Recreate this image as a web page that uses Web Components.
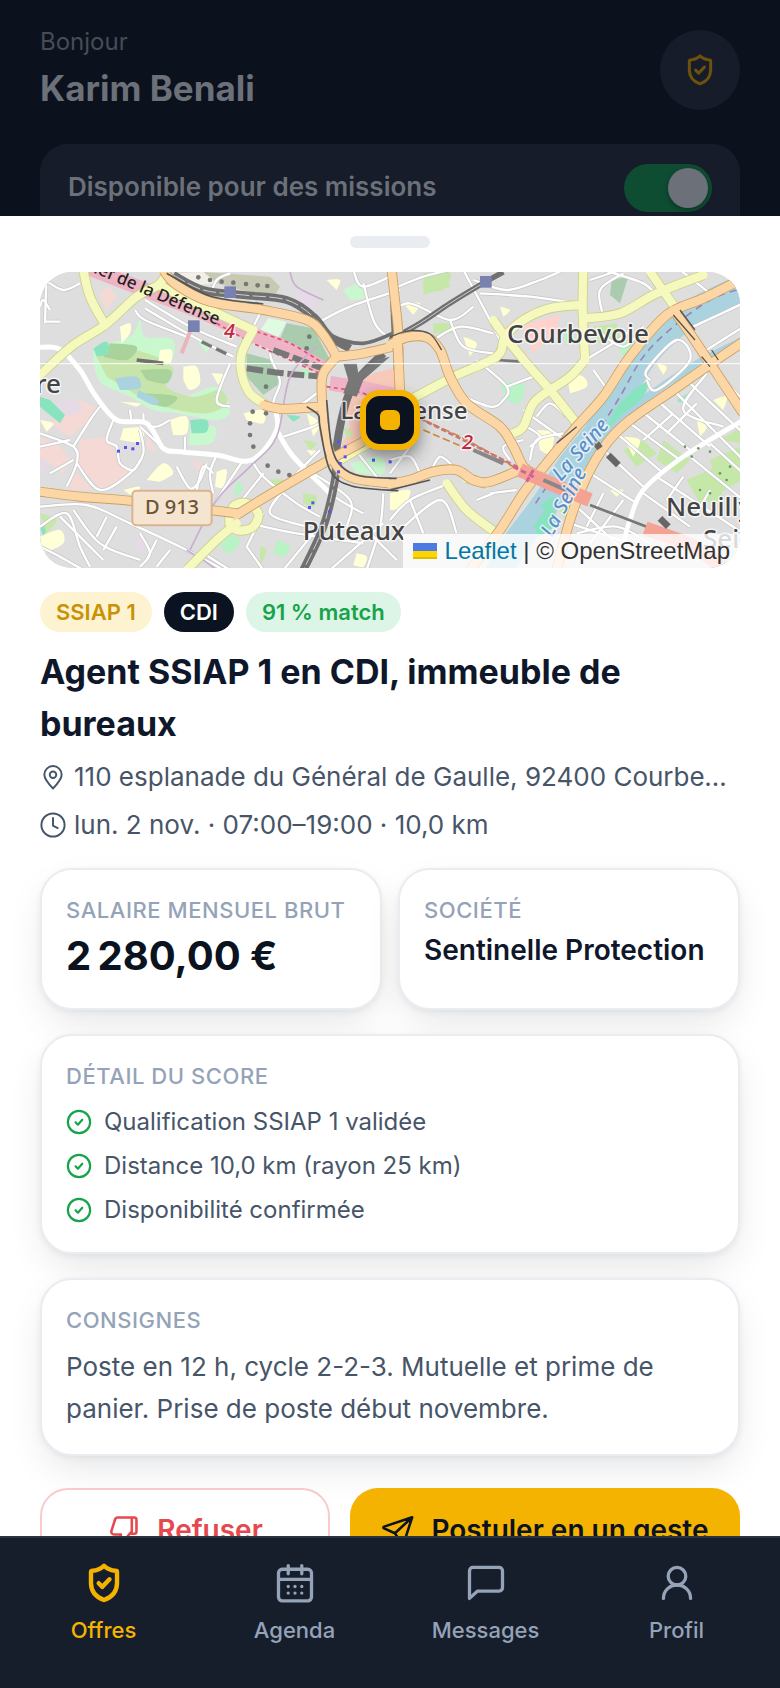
<!DOCTYPE html>
<html lang="fr">
<head>
<meta charset="utf-8">
<meta name="viewport" content="width=device-width, initial-scale=1">
<title>Offre de mission</title>
<style>
html, body { margin: 0; height: 100%; background: #0b111d; }
body { font-family: Inter, "Liberation Sans", sans-serif; color: #0f172a; overflow: hidden; }
</style>
</head>
<body>
<app-shell>
  <agent-header slot="header" name="Karim Benali"></agent-header>
  <offer-sheet>
    <offer-map slot="map"></offer-map>
    <ui-chip slot="chips" tone="gold">SSIAP 1</ui-chip>
    <ui-chip slot="chips" tone="dark">CDI</ui-chip>
    <ui-chip slot="chips" tone="green">91 % match</ui-chip>
    <span slot="title">Agent SSIAP 1 en CDI, immeuble de bureaux</span>
    <meta-line slot="meta" icon="pin">110 esplanade du Général de Gaulle, 92400 Courbevoie</meta-line>
    <meta-line slot="meta" icon="clock">lun. 2 nov. · 07:00–19:00 · 10,0 km</meta-line>
    <info-card slot="stats" heading="Salaire mensuel brut"><stat-value size="large">2&#8239;280,00&nbsp;€</stat-value></info-card>
    <info-card slot="stats" heading="Société"><stat-value>Sentinelle Protection</stat-value></info-card>
    <info-card heading="Détail du score">
      <score-list>
        <score-item>Qualification SSIAP 1 validée</score-item>
        <score-item>Distance 10,0 km (rayon 25 km)</score-item>
        <score-item>Disponibilité confirmée</score-item>
      </score-list>
    </info-card>
    <info-card heading="Consignes"><note-text>Poste en 12 h, cycle 2-2-3. Mutuelle et prime de panier. Prise de poste début novembre.</note-text></info-card>
    <action-button slot="actions" icon="thumb" tone="danger">Refuser</action-button>
    <action-button slot="actions" icon="send" tone="primary">Postuler en un geste</action-button>
  </offer-sheet>
  <tab-bar slot="tabs"></tab-bar>
</app-shell>

<script>
const ICONS = {
  shield: '<path d="M12 2.6c-1.7 1.7-3.9 2.6-6.4 2.7-.4 0-.7.3-.7.7V12c0 4.6 3 7.8 7.1 9.3 4.100-1.500 7.100-4.700 7.100-9.300V6c0-.4-.3-.7-.7-.7-2.500-.1-4.700-1-6.400-2.700z"/><path d="m9.100 12.100 2 2 3.900-4.100"/>',
  calendar: '<rect x="3" y="4.500" width="18" height="17.200" rx="2"/><path d="M3 10h18M8.300 2.500v4.500M15.700 2.500v4.500"/><g fill="currentColor" stroke="none"><circle cx="8.300" cy="13.900" r=".9"/><circle cx="12" cy="13.900" r=".9"/><circle cx="15.700" cy="13.900" r=".9"/><circle cx="8.300" cy="17.500" r=".9"/><circle cx="12" cy="17.500" r=".9"/><circle cx="15.700" cy="17.500" r=".9"/></g>',
  message: '<path d="M3 20.400V5.400c0-1.100.8-1.900 1.900-1.900h14.200c1.100 0 1.900.8 1.900 1.900v9.100c0 1.100-.8 1.900-1.900 1.900H7.400z"/>',
  user: '<circle cx="12" cy="8.300" r="4.800"/><path d="M4.600 20.400c0-4.200 3.300-7.300 7.400-7.300s7.400 3.100 7.400 7.300"/>',
  pin: '<path d="M12 22.600c-4.900-5.200-8-8.800-8-12.700a8 8 0 0 1 16 0c0 3.900-3.100 7.500-8 12.700z"/><circle cx="12" cy="10" r="3"/>',
  clock: '<circle cx="12" cy="12" r="10.700"/><path d="M12 5.600V12.600l4.300 2.200"/>',
  check: '<circle cx="12" cy="12" r="10.300"/><path d="m8.800 12.300 2.200 2.200 4-4.600"/>',
  thumb: '<path d="M17.500 3.200H7.600c-1 0-1.600.5-1.900 1.400L3.200 12.400c-.5 1.500.4 2.800 1.900 2.800h4.800l-1.300 4.200c-.3 1.300.6 2.400 1.900 2.400l5.200-6.800 1.800-1.800zM17.500 3.200h1.700c1 0 1.600.6 1.600 1.600v8.200c0 1-.6 1.600-1.600 1.600h-1.700"/>',
  send: '<path d="M22 3 2.200 9.600c-.7.300-.7 1 0 1.300l7.600 3.400 5 7.400c.4.600 1 .5 1.200-.2zM22 3 9.800 14.300"/>'
};

/* Small base: renders a shadow root from css() and html(). */
class View extends HTMLElement {
  connectedCallback() {
    if (this.shadowRoot) return;
    this.attachShadow({ mode: 'open' }).innerHTML = `<style>*{box-sizing:border-box}:host{display:block;box-sizing:border-box}${this.css()}</style>${this.html()}`;
  }
}

customElements.define('ui-icon', class extends View {
  css() { return ':host{flex:none;width:var(--icon,24px);height:var(--icon,24px)}svg{display:block;width:100%;height:100%}'; }
  html() { return `<svg viewBox="0 0 24 24" fill="none" stroke="currentColor" stroke-width="${this.getAttribute('weight') || '1.800'}" stroke-linecap="round" stroke-linejoin="round" aria-hidden="true">${ICONS[this.getAttribute('name')]}</svg>`; }
});

customElements.define('app-shell', class extends View {
  css() { return `:host{display:grid;grid-template-rows:216px minmax(0,1fr) auto;grid-template-columns:minmax(0,1fr);height:100vh}
    div{overflow:hidden;min-height:0}`; }
  html() { return '<div><slot name="header"></slot></div><div><slot></slot></div><slot name="tabs"></slot>'; }
});

customElements.define('agent-header', class extends View {
  css() { return `:host{padding:24px 40px;color:#6c7079}
    .top{display:flex;justify-content:space-between;align-items:center;margin-bottom:28px}
    p{margin:0;font-size:24px;line-height:36px;color:#474c56}
    h1{margin:0;font-size:35px;line-height:56px;font-weight:700}
    .badge{display:grid;place-items:center;width:80px;height:80px;border:0;border-radius:50%;background:#161c29;color:#6d510c;--icon:36px;padding:0}
    .row{display:flex;justify-content:space-between;align-items:flex-start;padding:20px 28px;min-height:120px;border-radius:28px;background:#161c29}
    label{font-size:26px;line-height:46px;font-weight:600}
    input{appearance:none;margin:0;width:88px;height:48px;padding:4px;border-radius:24px;background:#0f4d33;display:flex;justify-content:flex-end}
    input::before{content:"";width:40px;height:40px;border-radius:50%;background:#6c7079;box-shadow:0 2px 6px #0005}`; }
  html() { return `<div class="top"><div><p>Bonjour</p><h1>${this.getAttribute('name')}</h1></div>
    <button class="badge" aria-label="Habilitations"><ui-icon name="shield" weight="2"></ui-icon></button></div>
    <div class="row"><label for="dispo">Disponible pour des missions</label><input id="dispo" type="checkbox" role="switch" checked></div>`; }
});

customElements.define('offer-sheet', class extends View {
  css() { return `:host{background:#fff;padding:20px 40px 40px;min-height:100%}
    .handle{width:80px;height:12px;border-radius:6px;background:#e9edf2;margin:0 auto 24px}
    .chips{display:flex;gap:12px;margin:24px 0 14px}
    h2{margin:0 0 3px;font-size:34px;line-height:52px;font-weight:700;color:#0f172a}
    .stats{display:grid;grid-template-columns:repeat(2,minmax(0,1fr));gap:16px;margin-top:19px}
    .cards{display:grid;gap:24px;margin-top:24px}
    .actions{display:grid;grid-template-columns:290px minmax(0,1fr);gap:20px;margin-top:32px}`; }
  html() { return `<div class="handle"></div><slot name="map"></slot><div class="chips"><slot name="chips"></slot></div>
    <h2><slot name="title"></slot></h2><slot name="meta"></slot><div class="stats"><slot name="stats"></slot></div>
    <div class="cards"><slot></slot></div><div class="actions"><slot name="actions"></slot></div>`; }
});

customElements.define('ui-chip', class extends View {
  css() { return `:host{padding:0 16px;border-radius:20px;font-size:22px;line-height:40px;font-weight:600}
    :host([tone=gold]){background:#fef3d0;color:#c79206}:host([tone=dark]){background:#0b1220;color:#fff}:host([tone=green]){background:#dcf5e6;color:#16a34a}`; }
  html() { return '<slot></slot>'; }
});

customElements.define('meta-line', class extends View {
  css() { return `:host{display:flex;align-items:center;gap:8px;height:48px;font-size:26px;line-height:48px;color:#475569;--icon:26px}
    span{min-width:0;overflow:hidden;white-space:nowrap;text-overflow:ellipsis}`; }
  html() { return `<ui-icon name="${this.getAttribute('icon')}"></ui-icon><span><slot></slot></span>`; }
});

customElements.define('info-card', class extends View {
  css() { return `:host{border:2px solid #e9edf2;border-radius:32px;padding:24px;background:#fff;box-shadow:0 2px 6px #0b12200f,0 16px 40px -8px #0b12201f}
    h3{margin:0;font-size:22px;line-height:32px;font-weight:500;letter-spacing:.025em;text-transform:uppercase;color:#94a3b8}`; }
  html() { return `<h3>${this.getAttribute('heading')}</h3><slot></slot>`; }
});

customElements.define('stat-value', class extends View {
  css() { return `:host{font-size:28px;line-height:40px;font-weight:600;margin-top:4px;color:#0f172a;white-space:nowrap}
    :host([size=large]){font-size:40px;line-height:56px;font-weight:700;margin-top:2px;color:#0b1220}`; }
  html() { return '<slot></slot>'; }
});

customElements.define('score-list', class extends View {
  css() { return ':host{display:grid;gap:8px;margin-top:12px}'; }
  html() { return '<slot></slot>'; }
});

customElements.define('score-item', class extends View {
  css() { return ':host{display:flex;align-items:center;gap:12px;font-size:24px;line-height:36px;color:#475569;--icon:26px}ui-icon{color:#16a34a}'; }
  html() { return '<ui-icon name="check" weight="2"></ui-icon><span><slot></slot></span>'; }
});

customElements.define('note-text', class extends View {
  css() { return ':host{margin-top:10px;font-size:26px;line-height:42px;color:#475569}'; }
  html() { return '<slot></slot>'; }
});

customElements.define('action-button', class extends View {
  css() { return `button{width:100%;height:84px;display:flex;align-items:center;justify-content:center;gap:16px;border-radius:28px;border:0;background:#f5b301;color:#0b1220;font:600 28px/40px Inter,sans-serif;white-space:nowrap;--icon:34px;padding:0}
    :host([tone=danger]) button{background:#fff;border:2px solid #f9c9cb;color:#e5484d}`; }
  html() { return `<button><ui-icon name="${this.getAttribute('icon')}"></ui-icon><slot></slot></button>`; }
});

customElements.define('tab-bar', class extends View {
  css() { return `:host{background:#171e2b;border-top:2px solid #2c3440}
    nav{display:grid;grid-template-columns:repeat(4,minmax(0,1fr));padding:23px 8px 41px}
    a{display:flex;flex-direction:column;align-items:center;gap:8px;color:#94a3b8;text-decoration:none;font-size:22px;line-height:34px;font-weight:500;--icon:44px}
    a[aria-current]{color:#f5b301}`; }
  html() { return `<nav aria-label="Navigation principale">
    <a href="#offres" aria-current="page"><ui-icon name="shield" weight="2.400"></ui-icon>Offres</a>
    <a href="#agenda"><ui-icon name="calendar"></ui-icon>Agenda</a>
    <a href="#messages"><ui-icon name="message"></ui-icon>Messages</a>
    <a href="#profil"><ui-icon name="user"></ui-icon>Profil</a></nav>`; }
});

/* ---- Map: geometry is kept at three units per pixel, east half offset by E ---- */
const E = 1080;
const pts = (s, dx) => s.trim().split(/\s+/).map(p => { const [x, y] = p.split(',').map(Number); return [x + dx, y]; });
/* Catmull-Rom curve through a list of points */
function curve(s, dx = 0) {
  const p = pts(s, dx); let d = `M${p[0]}`;
  for (let i = 0; i < p.length - 1; i++) {
    const a = p[i - 1] || p[i], b = p[i], c = p[i + 1], e = p[i + 2] || c;
    d += `C${b[0] + (c[0] - a[0]) / 6} ${b[1] + (c[1] - a[1]) / 6} ${c[0] - (e[0] - b[0]) / 6} ${c[1] - (e[1] - b[1]) / 6} ${c[0]} ${c[1]}`;
  }
  return d;
}
const poly = (fill, list, dx = 0, extra = '') => list.map(s => `<path d="M${pts(s, dx).join('L')}Z" fill="${fill}" ${extra}/>`).join('');
const blob = (fill, list, dx = 0) => list.map(s => `<path d="${curve(s, dx)}Z" fill="${fill}"/>`).join('');
const line = (col, w, list, dx = 0, extra = '') => list.map(s => `<path d="${curve(s, dx)}" fill="none" stroke="${col}" stroke-width="${w}" ${extra}/>`).join('');

function mapArt() {
  const orangeW = ['400,30 440,75 540,125 700,150 830,180 880,225 920,290', '920,290 1000,280 1110,255', '1085,30 1095,120 1105,220 1105,330', '920,290 880,340 875,400 885,520 915,610 970,655 1100,672', '700,435 760,447 870,440', '30,695 150,710 330,725 620,760', '620,765 700,715 880,610 1000,545'];
  const orangeE = ['0,255 50,232 110,232 150,270 180,350 230,430 330,500 370,560 400,620 430,640', '0,672 60,660 130,635 200,630 250,660 300,665 400,625', '1060,55 940,115 830,165 720,290 640,410 560,500 470,610 400,700 330,810 240,930', '850,150 900,220 960,310 1060,460', '1060,245 950,320 850,390 720,480 650,550 590,650 540,780 500,930', '22,230 30,400'];
  const yellowW = ['160,30 180,110 225,195', '30,345 130,255 225,195 320,110 385,75 410,40', '385,75 520,140 670,210', '670,210 635,280 635,340 660,400 715,440', '470,930 560,840 620,790', '930,600 1000,560 1050,540', '600,760 615,735 650,730 685,760 670,800 630,812 600,795 600,760'];
  const yellowE = ['60,420 190,350 320,290 345,230 400,180 480,145 575,135', '580,30 578,150 585,290', '345,230 410,310 480,390 560,490', '480,390 540,350 585,300', '480,390 430,430 400,500 370,520', '585,175 690,160 800,100 940,45', '780,35 850,135', '310,180 345,230', '170,670 230,750 320,820', '230,655 290,672'];
  const whiteW = ['30,262 90,268 150,330 195,405 260,480 350,490 400,565 450,575 560,585 665,600 740,510 730,430 750,365 725,300 720,280', '345,120 490,205 620,260', '345,145 480,225 610,290', '315,150 345,180 470,230', '50,30 45,190', '45,60 100,90 150,70', '45,185 90,185', '665,600 700,650 800,730 870,770', '740,510 790,590 900,700 1000,760', '560,585 540,640 550,700', '30,740 170,735 300,790 470,870 580,930', '680,795 800,820 1000,850', '410,40 440,90', '690,160 670,200', '860,190 960,140 1110,90', '1000,70 1030,180 1060,220 1100,240', '970,30 1000,80 1100,40', '30,520 130,560 140,610 110,680', '130,560 180,480 210,440', '140,610 210,690 300,640 340,580 330,510', '60,640 130,600', '30,560 120,540', '400,565 330,500', '250,480 230,540 260,560 270,610 310,630 330,600', '340,460 345,490 380,500 420,480', '465,530 465,575', '440,620 480,685 510,660 530,610', '300,450 305,490', '860,400 800,440 740,435', '760,530 850,500 880,480', '800,640 870,570', '700,640 620,740', '650,860 700,760', '650,860 700,930', '760,930 850,820', '520,880 600,930', '30,800 110,760 150,860 180,920', '90,770 220,900', '130,750 210,850 330,900', '230,770 200,830', '260,800 220,870', '330,820 360,880 330,920', '380,840 350,900', '420,870 380,920', '500,690 520,620 550,640', '850,640 960,720 950,800', '960,550 1040,650', '1060,700 1050,800 1010,930', '900,930 1060,790', '1000,800 1100,900', '30,860 90,890 160,930', '30,140 40,120 60,150', '640,600 560,720', '770,680 720,760 830,800', '600,310 560,420 600,440', '540,110 560,60 600,40'];
  const whiteE = ['0,90 100,50 180,30', '220,30 300,180 330,240', '270,100 420,110 560,130', '250,60 350,90 450,60 520,30', '0,160 60,130 180,180 250,140', '180,180 220,260 310,280', '130,240 210,200 310,220', '260,300 350,380 340,420 300,440 200,400', '350,380 430,350', '610,330 660,400', '585,300 700,230 720,200', '600,60 690,30', '640,170 630,90 700,40', '620,210 700,260 760,200', '440,470 480,430 530,470', '400,450 440,480 540,550', '420,600 440,540 520,520', '410,500 450,530 420,560', '0,600 60,590 90,640', '60,560 0,640', '120,640 150,590 190,620', '0,780 60,720 180,670', '60,720 100,820', '20,820 150,720 200,820', '640,30 760,70 800,110', '870,30 960,100', '910,200 1060,130', '950,270 1060,200', '780,360 770,330 860,240 900,300 800,390 770,360', '860,400 1000,540 1060,600', '1060,480 880,590 760,690 720,780 700,850', '720,490 870,600', '750,450 900,570', '800,420 960,560', '900,370 1060,520', '640,570 760,680', '680,520 820,640', '830,520 920,430', '760,540 850,460', '600,640 740,730', '560,740 700,870', '640,700 590,800', '700,720 600,850', '540,790 720,850', '760,700 900,800', '800,650 1060,820', '900,590 1060,720', '960,550 1060,640', '880,650 830,720', '960,690 920,760', '1010,370 1060,420', '950,340 880,450 1000,500', '360,600 340,560 400,540', '300,700 380,690', '260,720 310,700', '30,400 100,460', '560,820 680,800 780,850'];
  const roads = (list, dx, w, fill, edge) => line(edge, w + 5, list, dx, 'stroke-linecap="butt"') + line(fill, w, list, dx, 'stroke-linecap="round"');
  let s = '<rect x="0" y="0" width="2200" height="960" fill="#dedede"/>';
  /* landuse */
  s += poly('#f5d9d5', ['60,490 150,420 215,450 120,530', '150,540 230,530 270,600 300,640 220,695 140,610', '30,530 90,560 120,600 100,640 30,590', '130,630 190,690 120,690', '205,100 240,80 260,110 230,150', '490,600 520,610 500,635', '350,530 380,570 350,570']);
  s += poly('#e6dae6', ['80,430 130,410 160,450 110,470', '800,90 870,100 850,150 790,130', '30,590 60,610 30,640', '320,830 350,840 330,890']);
  s += poly('#f8c9b8', ['1030,340 1110,320 1110,560 930,570 960,500 940,400']);
  s += blob('#c9f8cf', ['190,260 300,230 330,180 345,230 430,240 420,320 380,390 460,410 560,380 600,450 560,480 440,460 370,450 300,410 215,370 190,310', '480,510 555,500 545,550 475,555', '940,90 990,70 1010,110 960,120', '500,240 540,250 530,280', '960,610 1050,590 1060,640 980,640']);
  s += blob('#c7e5ab', ['200,290 260,260 380,290 430,330 410,380 490,410 570,390 590,430 530,460 420,445 330,410 230,350', '1180,40 1260,40 1240,90 1180,90']);
  s += blob('#a9d39b', ['240,250 320,260 290,300 220,290', '330,330 420,330 410,370 350,360', '350,400 440,410 410,440 360,430']);
  s += blob('#aad3df', ['255,355 320,350 330,385 270,390', '325,390 385,420 370,435 320,410']);
  s += blob('#88e3bf', ['190,265 230,245 235,280 200,290', '480,480 530,480 530,515 485,520', '770,465 810,470 790,485']);
  s += poly('#88e3bf', ['30,410 60,420 105,465 90,490 30,440', '30,800 60,790 40,830']);
  s += poly('#a9cbae', ['770,190 850,205 900,300 880,310 740,260', '650,280 725,300 750,370 700,405 650,350']);
  s += poly('#dffce2', ['715,175 770,185 740,240 685,220']);
  s += poly('#c8c9b2', ['520,36 720,50 750,80 730,115 560,70']);
  s += poly('#f2efe9', ['440,40 520,36 560,70 500,75']);
  s += blob('#ffffd8', ['270,200 300,190 300,220 275,250', '390,270 425,270 420,310 385,310', '460,320 500,320 510,370 480,390 460,360', '545,340 580,345 565,375', '420,480 470,470 470,520 430,525', '280,505 340,505 330,545 270,540', '350,660 400,610 430,640 390,665', '560,635 590,630 580,680 555,680', '640,460 700,450 700,490 650,480', '830,460 870,490 850,530', '830,570 860,575 850,595', '270,425 330,430 320,440', '30,830 90,810 100,850 40,880', '30,480 70,490 50,515', '980,880 1010,890 1000,920 970,915', '280,690 330,680 310,710', '890,60 930,60 920,90']);
  s += blob('#c5e8a9', ['820,700 860,710 850,740 820,730', '30,760 80,780 50,820', '710,660 760,660 740,690', '820,540 860,550 840,570', '690,860 710,870 690,920', '940,500 970,520 950,535']);
  s += blob('#b9f2c4', ['740,840 780,860 760,890 730,880', '590,820 630,840 600,880 570,860', '620,660 640,690 610,710', '800,330 840,330 830,350']);
  s += poly('#c5e8a9', ['100,40 170,40 180,80 100,105', '610,200 680,190 690,240 620,250', '820,540 900,600 860,640 800,600', '960,600 1050,560 1055,660 990,700', '890,660 980,620 1000,720 930,730', '700,570 760,540 800,580 740,620', '990,540 1055,500 1055,550', '130,190 190,190 190,220 130,220', '500,740 550,740 540,800'], E);
  s += poly('#a9cbae', ['665,60 715,50 690,130 660,105'], E);
  s += poly('#ffd2cc', ['420,190 510,165 500,210 430,280 400,200'], E);
  s += blob('#b9f2c4', ['330,370 400,370 390,430 350,420', '670,240 740,250 700,290', '530,200 560,250 520,240', '600,620 620,640 590,650'], E);
  s += blob('#ffffd0', ['220,230 260,250 240,290', '530,340 580,350 590,380 540,400', '330,140 360,150 340,170', '800,310 830,320 820,345', '700,530 750,540 730,590', '920,480 950,500 930,530', '970,420 1010,410 1000,450', '440,510 490,520 480,580 450,570', '0,700 60,690 40,740 0,750', '40,130 90,130 70,165', '660,690 700,690 680,710'], E);
  s += line('#aad3df', 82, ['1080,75 960,130 860,190 760,290 690,410 620,520 540,620 460,740 370,860 320,950'], E);
  s += line('#aad3df', 22, ['1060,240 940,300 830,370 720,450 660,520'], E);
  s += blob('#88e3bf', ['640,520 690,430 770,365 760,410 700,460', '430,800 480,740 500,790 450,830', '450,740 490,710 480,760'], E);
  s += poly('#9de8c0', ['860,420 910,390 910,400 870,430'], E);
  s += line('#9a86b0', 5, ['1040,90 960,120 850,200 760,290 690,410 640,490', '470,680 430,740'], E, 'stroke-dasharray="22 16"');
  /* streets */
  s += line('#c6c6c6', 11, whiteW) + line('#c6c6c6', 11, whiteE, E) + line('#fff', 7, whiteW) + line('#fff', 7, whiteE, E);
  s += line('#fff', 15, ['30,262 90,268 150,330 195,405 260,480 350,490 400,565 450,575 560,585 665,600 740,510 730,430', '740,510 790,590 900,700']) + line('#fff', 14, ['1060,480 880,590 760,690 720,780 700,850'], E);
  /* rail */
  s += line('#707070', 24, ['430,45 520,90 640,105 770,120 850,170 900,230 960,265', '1060,280 990,350 950,420 920,560 915,660 880,800 820,930']);
  s += line('#cfcfcf', 3, ['430,45 520,90 640,105 770,120 850,170 900,230', '920,640 880,800 820,930'], 0, 'stroke-dasharray="40 10"');
  s += line('#707070', 16, ['340,36 270,75 180,130 90,190 0,240'], E) + line('#cfcfcf', 3, ['270,75 180,130 90,190 0,240'], E);
  s += line('#707070', 11, ['850,175 900,225 1000,250 1100,215', '320,300 400,310'], 0);
  s += line('#777', 8, ['320,300 400,305', '600,735 770,800 830,820', '0,30 10,250'], E);
  s += line('#eeb3c4', 44, ['180,25 320,80 500,150 660,220 780,270 890,330', '900,370 1000,385 1110,410']);
  s += line('#e05070', 5, ['560,190 660,245 780,300 890,350', '680,215 780,250 880,310', '890,380 1000,400 1060,440'], 0, 'stroke-dasharray="12 10"');
  s += line('#777', 18, ['650,325 760,340 880,350', '730,270 890,330'], 0, 'stroke-dasharray="50 12"');
  s += line('#777', 10, ['515,245 590,282'], 0, 'stroke-dasharray="34 14"');
  s += line('#eab4ba', 12, ['480,215 455,280']);
  s += line('#c9aed0', 5, ['480,870 560,720 660,620 740,530 780,350 860,260', '780,36 800,80 880,120']);
  s += line('#c9aed0', 5, ['470,870 520,900 560,930']);
  /* roads */
  s += roads(yellowW, 0, 25, '#f6f9be', '#ccd08c') + roads(yellowE, E, 25, '#f6f9be', '#ccd08c');
  s += roads(orangeW, 0, 25, '#fcd6a4', '#c9a064') + roads(orangeE, E, 26, '#fcd6a4', '#c9a064');
  s += line('#555', 5, ['830,440 865,465 870,500 900,630 965,678 1105,692', '890,420 905,560 935,620 990,648 1100,655', '410,40 540,108 700,132']);
  s += line('#555', 4, ['0,230 60,212 120,222 155,270', '850,165 915,240', '870,150 915,210', '500,550 560,500', '1,690 120,660', '935,290 960,320', '965,270 985,300'], E);
  s += line('#d2853c', 5, ['100,480 230,540 370,620', '100,510 240,570'], E, 'stroke-dasharray="22 10"');
  s += line('#c77', 8, ['90,475 200,530 400,630'], E, 'stroke-dasharray="16 8"');
  s += line('#f4a294', 42, ['390,630 480,670 600,720', '765,805 900,855 1000,920'], E) + line('#888', 12, ['250,570 340,610', '460,660 540,695'], E) + line('#666', 20, ['655,585 685,615', '810,775 835,800', '615,545 630,565'], E);
  s += line('#d35f9b', 9, ['370,620 440,655', '410,665 430,630'], E, 'stroke-dasharray="16 10"');
  s += poly('#777', ['940,310 980,310 985,340 1040,300 1080,290 1000,360 980,410 940,400 955,360'], 0);
  s += [[505, 52], [540, 60], [575, 65], [610, 68], [648, 72], [683, 76], [712, 78], [838, 230], [830, 265], [660, 490], [660, 525], [670, 560], [713, 617], [745, 635], [778, 645], [708, 380], [668, 455], [708, 460]].map(([x, y]) => `<circle cx="${x}" cy="${y}" r="7" fill="#777"/>`).join('');
  s += [[265, 573], [286, 562], [308, 566], [322, 550], [925, 545], [945, 560], [930, 610], [945, 590], [925, 635], [1030, 600], [1080, 605], [838, 742], [848, 728], [898, 755]].map(([x, y]) => `<rect x="${x - 4}" y="${y - 4}" width="9" height="9" fill="#55e"/>`).join('');
  s += [[583, 79], [474, 181], [1350, 48]].map(([x, y]) => `<rect x="${x}" y="${y}" width="35" height="35" fill="#7981b0"/>`).join('');
  s += [[885, 560], [925, 565], [960, 575], [905, 590], [990, 640], [1020, 620], [930, 690], [960, 700], [1010, 660]].map(([x, y]) => `<circle cx="${x + E}" cy="${y}" r="4" fill="#6b9b5b"/>`).join('');
  s += '<rect x="307" y="692" width="238" height="104" rx="12" fill="#f5e4d0" stroke="#d9b48f" stroke-width="6"/>';
  s += '<path d="M0 311H2200" stroke="#fff" stroke-width="3"/>';
  return s;
}

customElements.define('offer-map', class extends View {
  css() { return `:host{position:relative;height:296px;border-radius:32px;overflow:hidden;background:#dedede}
    .art{display:block;width:100%;height:100%}
    text{font-family:"Noto Sans","Open Sans",sans-serif;font-size:26px;font-weight:500;fill:#444;stroke:#ffffffb0;stroke-width:3px;paint-order:stroke;stroke-linejoin:round}
    .sm{font-size:24px}.seine{fill:#5b90c8;font-size:20px;font-style:italic}.exit{fill:#c2273d;font-size:20px;font-style:italic}.street{font-size:17px;fill:#222;stroke:none}.ref{font-size:20px;fill:#6b5433;stroke:none}
    .marker{position:absolute;inset:0;margin:auto;width:60px;height:60px;border:6px solid #f5b301;border-radius:20px;background:#0b1220;display:grid;place-items:center;box-shadow:0 8px 16px #0006}
    .marker::before{content:"";width:20px;height:20px;border-radius:6px;background:#f5b301}
    .credit{position:absolute;right:0;bottom:0;display:flex;align-items:center;gap:8px;height:34px;padding:0 10px;background:#fffc;font:24px/34px "Liberation Sans",Arial,sans-serif;color:#333;white-space:pre}
    .credit svg{display:block;width:24px;height:16px}a{color:#0078a8;text-decoration:none}`; }
  html() { return `<svg class="art" viewBox="0 0 700 296" preserveAspectRatio="xMidYMid slice" role="img" aria-label="Carte de La Défense">
    <g transform="translate(-10 -12) scale(.33333)">${mapArt()}</g>
    <text x="538" y="71" text-anchor="middle">Courbevoie</text><text x="314" y="268" text-anchor="middle">Puteaux</text>
    <text class="sm" x="364" y="147" text-anchor="middle">La Défense</text><text x="626" y="244">Neuilly</text><text x="663" y="276">Sei</text>
    <text x="21" y="121" text-anchor="end">re</text><text class="ref" x="132" y="242" text-anchor="middle">D 913</text>
    <text class="exit" x="184" y="66">4</text><text class="exit" x="422" y="177">2</text>
    <text class="street" transform="translate(177 53) rotate(23)" text-anchor="end">nef de la Défense</text>
    <text class="seine" transform="translate(521 210) rotate(-49)">La Seine</text>
    <text class="seine" transform="translate(512 266) rotate(-62)">La Seine</text></svg>
    <div class="marker"></div>
    <div class="credit"><svg viewBox="0 0 12 8" aria-hidden="true"><path fill="#4C7BE1" d="M0 0h12v4H0z"/><path fill="#FFD500" d="M0 4h12v3H0z"/><path fill="#E0BC00" d="M0 7h12v1H0z"/></svg><span><a href="https://leafletjs.com">Leaflet</a> | © OpenStreetMap</span></div>`; }
});
</script>
</body>
</html>
